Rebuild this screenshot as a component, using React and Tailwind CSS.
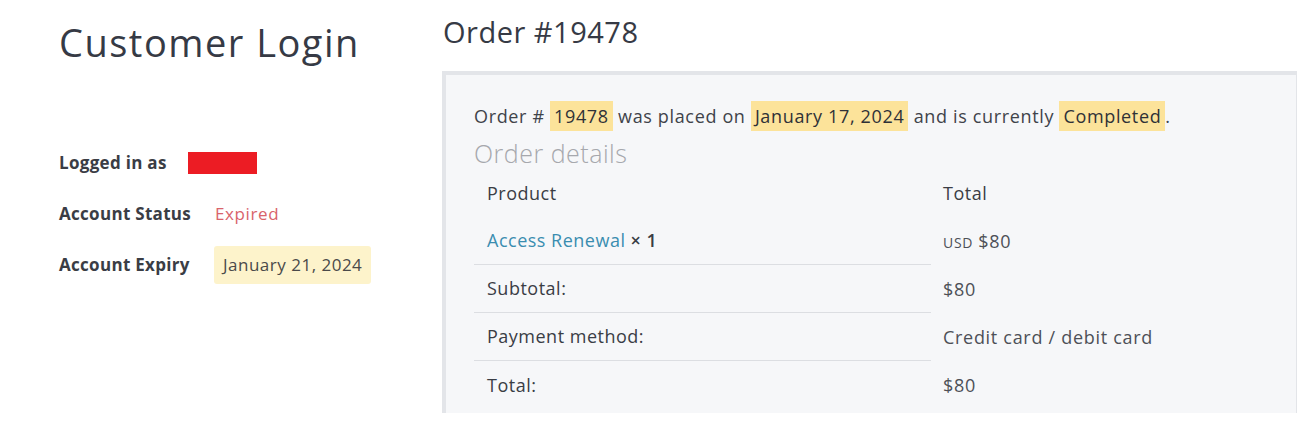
const rows = [
  { label: "Subtotal:", value: "$80" },
  { label: "Payment method:", value: "Credit card / debit card" },
  { label: "Total:", value: "$80" },
];

const Mark = ({ children }) => (
  <span className="bg-[#fce39a] px-[4px] py-[3px] text-[#2f3137]">{children}</span>
);

export default function App() {
  return (
    <div className="flex h-[421px] w-[1305px] overflow-hidden bg-white font-['Open_Sans','Noto_Sans',sans-serif] text-[#3a3d45]">
      {/* left column */}
      <div className="w-[442px] shrink-0 pl-[59px] pt-[19px]">
        <h1 className="text-[38px] leading-[46px] font-medium tracking-[1.5px] text-[#363a45]">
          Customer Login
        </h1>
        <div className="mt-[81px] flex flex-col gap-[17px] text-[17px] tracking-[0.3px]">
          <div className="flex h-[34px] items-center">
            <span className="w-[129px] font-bold">Logged in as</span>
            <span className="h-[22px] w-[69px] bg-[#ec1c24]"></span>
          </div>
          <div className="flex h-[34px] items-center">
            <span className="w-[156px] font-bold">Account Status</span>
            <span className="tracking-[0.6px] text-[#d9636b]">Expired</span>
          </div>
          <div className="flex h-[34px] items-center">
            <span className="w-[155px] font-bold">Account Expiry</span>
            <span className="flex h-[38px] items-center rounded-[3px] bg-[#fdf3cb] px-[9px] tracking-[0.5px] text-[#4a4a4a]">
              January 21, 2024
            </span>
          </div>
        </div>
      </div>

      {/* right column */}
      <div className="flex-1 pt-[13px]">
        <h2 className="pl-px text-[29px] leading-[38px] font-medium tracking-[0.5px] text-[#363a45]">Order #19478</h2>
        <div className="mt-[20px] mr-[8px] h-[342px] border-t-4 border-l-4 border-r border-[#e3e5e9] bg-[#f6f7f9] pt-[28px] pl-[28px]">
          <p className="text-[18px] leading-[26px] tracking-[0.65px] text-[#40434a]">
            Order # <Mark>19478</Mark> was placed on <Mark>January 17, 2024</Mark> and is currently{" "}
            <Mark>Completed</Mark>.
          </p>
          <h3 className="mt-[9px] text-[25px] leading-[30px] font-light tracking-[0.5px] text-[#a6a8ad]">Order details</h3>
          <div className="mt-[1px] w-[720px] text-[18px] tracking-[0.5px]">
            <div className="flex h-[48px] items-center">
              <div className="w-[457px] pl-[13px]">Product</div>
              <div className="pl-[12px]">Total</div>
            </div>
            <div className="flex h-[48px]">
              <div className="flex w-[457px] items-center border-b border-[#dcdee2] pl-[13px]">
                <span className="text-[#3a8db0]">Access Renewal</span>
                <span className="ml-[5px] font-semibold">× 1</span>
              </div>
              <div className="flex items-baseline self-center pl-[12px] tracking-[0.7px] text-[#4d5057]">
                <span className="mr-[5px] text-[14px] uppercase">usd</span>$80
              </div>
            </div>
            {rows.map((r, i) => (
              <div key={r.label} className="flex h-[48px]">
                <div
                  className={`flex w-[457px] items-center pl-[13px] ${
                    i < rows.length - 1 ? "border-b border-[#dcdee2]" : ""
                  }`}
                >
                  {r.label}
                </div>
                <div className="flex items-center pl-[12px] tracking-[0.7px] text-[#4d5057]">{r.value}</div>
              </div>
            ))}
          </div>
        </div>
      </div>
    </div>
  );
}
